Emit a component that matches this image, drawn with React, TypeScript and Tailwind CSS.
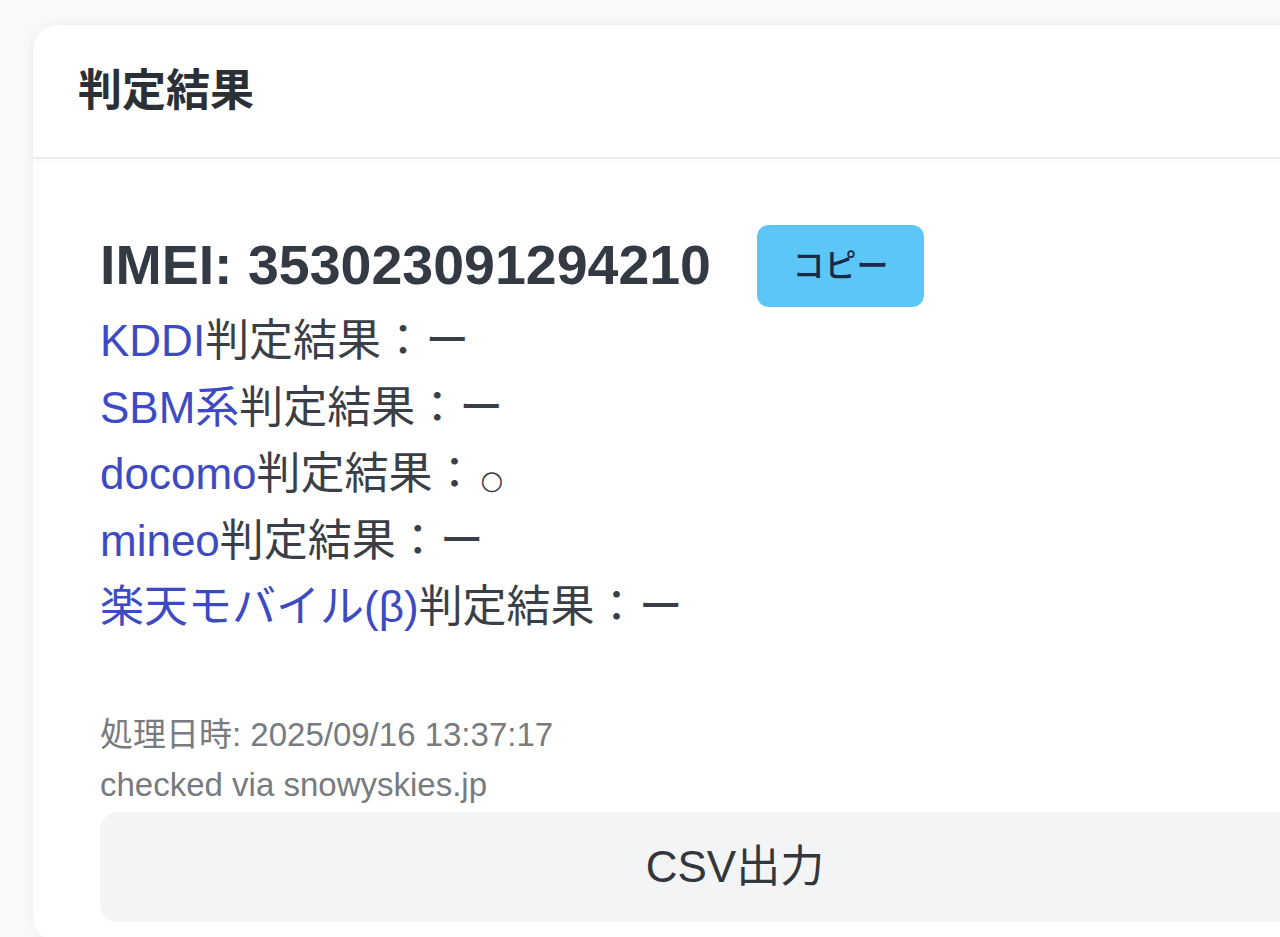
import React from "react";

const font = { fontFamily: '"Liberation Sans", Arial, "Noto Sans CJK JP", sans-serif' };

type Row = { carrier: string; result: string };

const rows: Row[] = [
  { carrier: "KDDI", result: "ー" },
  { carrier: "SBM系", result: "ー" },
  { carrier: "docomo", result: "○" },
  { carrier: "mineo", result: "ー" },
  { carrier: "楽天モバイル(β)", result: "ー" },
];

export default function App() {
  return (
    <div className="h-[937px] w-[1280px] overflow-hidden bg-[#f9f9f9] pl-[33px] pt-[25px]" style={font}>
      <div className="w-[1404px] rounded-[26px] bg-white shadow-[0_0_14px_rgba(0,0,0,0.05)]">
        <div className="flex h-[134px] items-center border-b-2 border-[#ededed] px-[45px] shadow-[0_3px_6px_rgba(0,0,0,0.03)]">
          <h2 className="text-[44px] font-bold text-[#2b2f36]">判定結果</h2>
        </div>

        <div className="px-[67px] pt-[66px] pb-[20px]">
          <div className="flex h-[82px] items-center">
            <span className="text-[55.5px] font-bold leading-none text-[#343a44]">IMEI: 353023091294210</span>
            <button className="ml-[46px] h-[82px] w-[167px] rounded-[12px] bg-[#5cc6f7] text-[32px] font-medium text-[#1b2a48]">
              コピー
            </button>
          </div>

          <div className="mt-px">
            {rows.map((r) => (
              <div key={r.carrier} className="h-[66.5px] text-[44px] leading-[66.5px] text-[#3a3f47]">
                <span className="text-[#3c4bc3]">{r.carrier}</span>判定結果：
                {r.result === "○" ? (
                  <span className="ml-[4px] text-[26px] leading-none" style={{ fontFamily: '"DejaVu Sans", sans-serif' }}>
                    {r.result}
                  </span>
                ) : (
                  r.result
                )}
              </div>
            ))}
          </div>

          <div className="mt-[69px] text-[33px] leading-[50px] text-[#777b80]">
            <p>処理日時: 2025/09/16 13:37:17</p>
            <p>checked via snowyskies.jp</p>
          </div>

          <button className="mt-[2px] h-[110px] w-full rounded-[18px] bg-[#f3f4f6] text-[44px] text-[#33373d]">
            CSV出力
          </button>
        </div>
      </div>
    </div>
  );
}
